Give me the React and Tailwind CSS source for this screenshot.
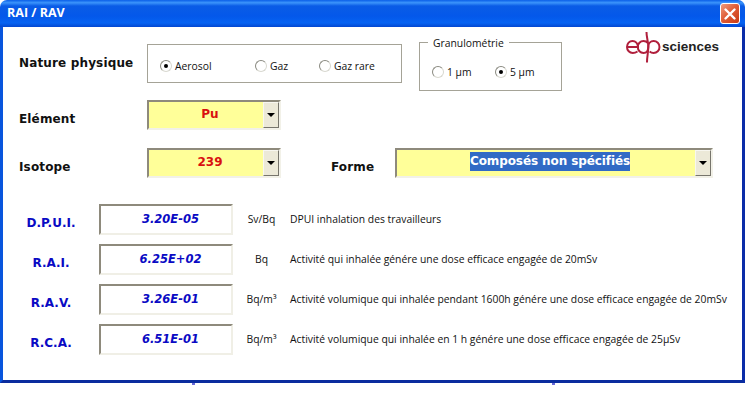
import React from "react";

const smallFont = "font-['Open_Sans',sans-serif] text-[10.35px] text-[#111]";
const labelFont = "font-['DejaVu_Sans',sans-serif] font-bold text-[12px] tracking-[0.15px] text-[#111]";

const Radio = ({ checked }) => (
  <span className="relative block w-[12px] h-[12px] shrink-0 rounded-full border border-[#8a8a80] bg-white border-b-[#d8d8d0] border-r-[#d8d8d0]">
    {checked && <span className="absolute left-[3px] top-[3px] w-[4px] h-[4px] rounded-full bg-black" />}
  </span>
);

const Option = ({ label, checked, className }) => (
  <div className={`flex items-center gap-[3px] ${className}`}>
    <Radio checked={checked} />
    <span className={`${smallFont} leading-[12px]`}>{label}</span>
  </div>
);

const Combo = ({ width, children }) => (
  <div className={`flex h-[30px] ${width} bg-[#ffff99] border-2 border-[#8e8a7c] border-r-[#f2f1e8] border-b-[#f2f1e8]`}>
    <div className="flex-1 flex justify-center pt-[2px] pl-[8px] min-w-0">{children}</div>
    <div className="w-[16px] flex items-center justify-center bg-[#ece9d8] border border-[#f8f7f0] border-r-[#77756c] border-b-[#77756c]">
      <span className="w-0 h-0 border-l-[4px] border-r-[4px] border-t-[4px] border-l-transparent border-r-transparent border-t-black" />
    </div>
  </div>
);

const Metric = ({ name, value, unit, text }) => (
  <div className="flex h-[31px]">
    <div className="w-[64px] pt-[11px] text-center font-['DejaVu_Sans',sans-serif] font-bold text-[12px] leading-[16px] text-[#0a0ac4]">{name}</div>
    <div className="ml-[16px] w-[134px] h-[31px] pt-[5px] pl-[9px] text-center border-2 border-[#8e8a7c] border-r-[#f0efe6] border-b-[#f0efe6] font-['DejaVu_Sans',sans-serif] font-bold italic text-[11.5px] leading-[16px] text-[#0a0ac4]">{value}</div>
    <div className={`ml-[13px] w-[31px] pt-[7px] text-center whitespace-nowrap ${smallFont} leading-[16px]`}>{unit}</div>
    <div className={`ml-[13px] pt-[7px] whitespace-nowrap ${smallFont} leading-[16px]`}>{text}</div>
  </div>
);

const metrics = [
  { name: "D.P.U.I.", value: "3.20E-05", unit: "Sv/Bq", text: "DPUI inhalation des travailleurs" },
  { name: "R.A.I.", value: "6.25E+02", unit: "Bq", text: "Activité qui inhalée génére une dose efficace engagée de 20mSv" },
  { name: "R.A.V.", value: "3.26E-01", unit: "Bq/m³", text: "Activité volumique qui inhalée pendant 1600h génére une dose efficace engagée de 20mSv" },
  { name: "R.C.A.", value: "6.51E-01", unit: "Bq/m³", text: "Activité volumique qui inhalée en 1 h génére une dose efficace engagée de 25µSv" },
];

const Logo = () => (
  <div className="flex items-center">
    <svg width="36" height="31" viewBox="0 0 36 31" fill="none" stroke="#b01f3c" strokeWidth="2">
      <path d="M1 15h11c0-3.500-2.500-6-5.500-6S1 11.500 1 15s2.600 6 5.800 6c1.800 0 3.200-.5 4.700-1.500" />
      <path d="M22 11c-1.200-1.300-2.700-2-4.500-2-3.300 0-5.700 2.700-5.700 6s2.400 6 5.700 6c3 0 4.800-2.500 4.800-6 0-6-1.800-9-1.800-15" />
      <path d="M22.300 15c0-3.500 2.200-6 5.300-6 3.300 0 5.900 2.700 5.900 6s-2.600 6-5.900 6c-1.500 0-3-.6-4-1.500M22.300 15c0 6-1.300 9-1.300 15.500" />
    </svg>
    <span className="font-['Liberation_Sans',sans-serif] font-bold text-[13.5px] text-[#222]">sciences</span>
  </div>
);

export default function App() {
  return (
    <div className="w-[749px] h-[400px] bg-white overflow-hidden">
      <div className="w-[745px] h-[383px] flex flex-col rounded-t-[7px] overflow-hidden">
        <div className="h-[27px] shrink-0 flex items-center justify-between pl-[7px] pr-[5px] bg-[linear-gradient(180deg,#0a5fe8_0%,#3b94fb_10%,#0a5ce6_22%,#0458ea_60%,#0663f2_85%,#0347d0_100%)]">
          <span className="font-['Open_Sans',sans-serif] font-bold text-[12.5px] text-white">RAI / RAV</span>
          <div className="w-[20px] h-[21px] flex items-center justify-center rounded-[3px] border border-white bg-[linear-gradient(135deg,#ee9a7c_0%,#de5a34_50%,#c83a14_100%)]">
            <svg width="14" height="14" viewBox="0 0 14 14" stroke="white" strokeWidth="2.400" strokeLinecap="round">
              <path d="M2.500 2.500l9 9M11.500 2.500l-9 9" />
            </svg>
          </div>
        </div>
        <div className="flex-1 border-l-[3px] border-l-[#0855dd] border-r-[3px] border-r-[#0a2ca8] border-b-[3px] border-b-[#0a2c9e] bg-white pl-[16px] pt-[15px]">
          <div className="flex h-[49px] items-start">
            <div className={`${labelFont} w-[128px] pt-[12px] leading-[18px]`}>Nature physique</div>
            <div className="w-[255px] h-[39px] mt-[2px] flex items-center border border-[#a5a397] pt-[4px]">
              <Option label="Aerosol" checked className="ml-[12px] w-[95px]" />
              <Option label="Gaz" className="w-[64px]" />
              <Option label="Gaz rare" />
            </div>
            <div className="relative w-[143px] h-[49px] ml-[17px] border border-[#a5a397] flex items-center pt-[11px]">
              <span className={`absolute left-[8px] -top-[7px] px-[5px] bg-white ${smallFont} leading-[14px]`}>Granulométrie</span>
              <Option label="1 µm" className="ml-[12px] w-[63px]" />
              <Option label="5 µm" checked />
            </div>
            <div className="ml-[64px] -mt-[10px]">
              <Logo />
            </div>
          </div>
          <div className="flex mt-[9px] h-[30px]">
            <div className={`${labelFont} w-[128px] pt-[10px] leading-[18px]`}>Elément</div>
            <Combo width="w-[134px]">
              <span className="font-['DejaVu_Sans',sans-serif] font-bold text-[12px] leading-[20px] text-[#d81010]">Pu</span>
            </Combo>
          </div>
          <div className="flex mt-[18px] h-[30px]">
            <div className={`${labelFont} w-[128px] pt-[10px] leading-[18px]`}>Isotope</div>
            <Combo width="w-[134px]">
              <span className="font-['DejaVu_Sans',sans-serif] font-bold text-[12px] leading-[20px] text-[#d81010]">239</span>
            </Combo>
            <div className={`${labelFont} ml-[50px] w-[64px] pt-[10px] leading-[18px]`}>Forme</div>
            <Combo width="w-[318px]">
              <span className="h-[19px] bg-[#316ac5] font-['DejaVu_Sans',sans-serif] font-bold text-[12px] tracking-[-0.1px] leading-[19px] text-white whitespace-nowrap">Composés non spécifiés</span>
            </Combo>
          </div>
          <div className="flex flex-col gap-[9px] mt-[26px]">
            {metrics.map((m) => (
              <Metric key={m.name} {...m} />
            ))}
          </div>
        </div>
      </div>
      <div className="flex h-[2px]">
        <span className="ml-[192px] w-[3px] bg-[#6a6ad8]" />
        <span className="ml-[357px] w-[3px] bg-[#6a6ad8]" />
      </div>
    </div>
  );
}
